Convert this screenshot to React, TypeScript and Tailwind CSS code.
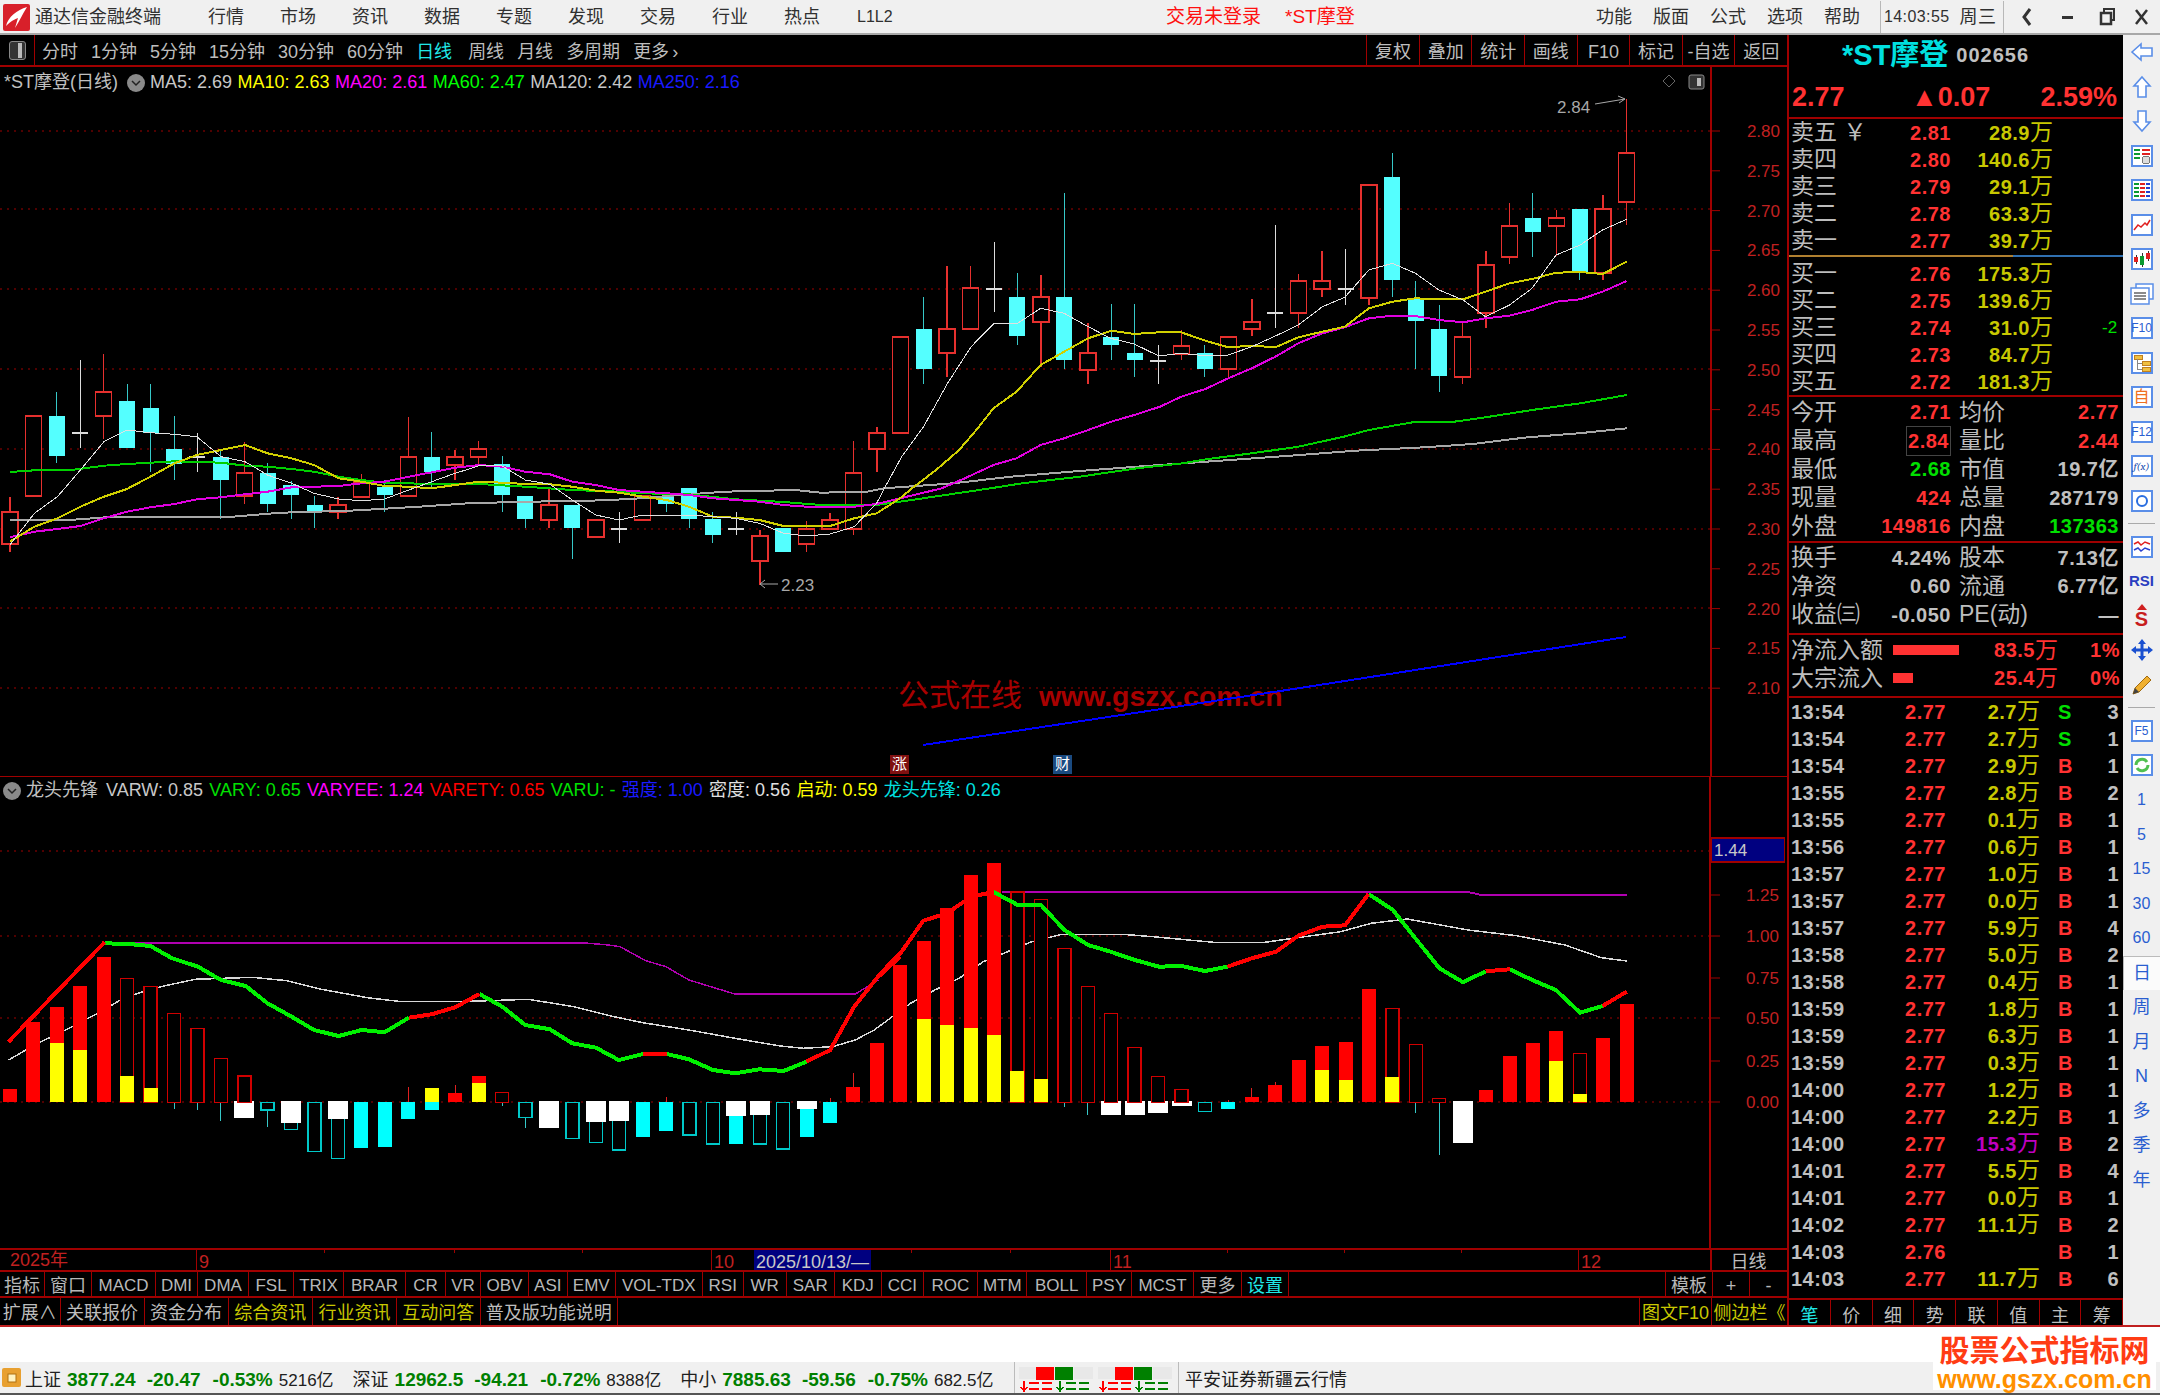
import React from "react";

const FONT = { fontFamily: '"Liberation Sans","Noto Sans CJK SC",sans-serif' };

type Candle = [number, number, number, number, "r" | "c" | "w"];

// body top, body bottom, wick top, wick bottom, in page pixels
const candles: Candle[] = [
  [512, 544, 497, 552, "r"], [416, 496, 416, 496, "r"], [416, 456, 392, 463, "c"], [433, 433, 360, 448, "w"],
  [392, 416, 354, 439, "r"], [401, 448, 384, 448, "c"], [408, 433, 384, 472, "c"], [449, 464, 416, 480, "c"],
  [457, 457, 433, 472, "w"], [457, 480, 450, 519, "c"], [473, 496, 442, 504, "r"], [473, 504, 463, 512, "c"],
  [485, 495, 481, 519, "c"], [505, 512, 496, 528, "c"], [505, 512, 497, 519, "r"], [482, 497, 474, 497, "r"],
  [487, 495, 480, 512, "c"], [457, 496, 417, 496, "r"], [457, 472, 432, 487, "c"], [457, 465, 450, 480, "r"],
  [449, 457, 441, 465, "r"], [464, 495, 456, 512, "c"], [496, 519, 496, 528, "c"], [505, 520, 487, 528, "r"],
  [505, 528, 505, 559, "c"], [520, 537, 520, 537, "r"], [529, 529, 512, 543, "w"], [496, 520, 496, 520, "r"],
  [496, 504, 496, 512, "c"], [488, 519, 488, 528, "c"], [519, 535, 512, 543, "c"], [529, 529, 512, 535, "w"],
  [536, 561, 530, 585, "r"], [528, 552, 528, 552, "c"], [529, 544, 521, 552, "r"], [520, 529, 513, 529, "r"],
  [473, 529, 441, 535, "r"], [433, 449, 427, 472, "r"], [337, 433, 337, 433, "r"], [329, 369, 297, 384, "c"],
  [329, 353, 266, 377, "r"], [288, 329, 266, 329, "r"], [289, 289, 242, 312, "w"], [297, 336, 273, 345, "c"],
  [297, 322, 275, 367, "r"], [297, 360, 193, 369, "c"], [353, 370, 323, 384, "r"], [337, 345, 304, 360, "c"],
  [353, 360, 304, 377, "c"], [361, 361, 345, 384, "w"], [346, 354, 330, 360, "r"], [353, 369, 345, 377, "c"],
  [337, 369, 337, 377, "r"], [322, 329, 299, 336, "r"], [313, 313, 225, 328, "w"], [281, 313, 274, 328, "r"],
  [281, 289, 251, 297, "r"], [289, 289, 249, 305, "w"], [185, 298, 185, 305, "r"], [177, 280, 153, 297, "c"],
  [298, 321, 281, 369, "c"], [329, 376, 305, 392, "c"], [337, 377, 323, 384, "r"], [265, 313, 251, 328, "r"],
  [226, 257, 203, 264, "r"], [218, 232, 193, 257, "c"], [218, 226, 210, 256, "r"], [209, 272, 209, 280, "c"],
  [209, 273, 195, 280, "r"], [153, 202, 99, 225, "r"],
];

const slotX = (i: number) => 10 + 23.43 * i;

type P = [number, number];
const a7 = (l: P[]): P[] => l.map(([x, y]) => [x / 1.742, 300 + y / 3]);
const a8 = (l: P[]): P[] => l.map(([x, y]) => [850 + x / 1.742, 90 + y / 3]);
const b9 = (l: P[]): P[] => l.map(([x, y]) => [x / 1.742, 770 + y / 3]);
const b10 = (l: P[]): P[] => l.map(([x, y]) => [850 + x / 1.6505, 770 + y / 3]);
const pts = (l: P[]) => l.map(([x, y]) => `${x.toFixed(1)},${y.toFixed(1)}`).join(" ");

const ma5 = [
  ...a7([[17,735],[60,640],[100,590],[140,510],[181,425],[221,390],[262,398],[304,403],[343,410],[385,470],[427,485],[466,525],[508,550],[547,580],[590,597],[630,602],[670,597],[712,570],[752,545],[793,520],[835,497],[875,498],[915,540],[958,553],[997,600],[1038,645],[1078,660],[1120,645],[1162,645],[1200,645],[1242,650],[1281,655],[1323,670],[1365,700],[1405,708],[1446,702],[1488,680],[1527,610]]),
  ...a8([[60,1195],[90,1100],[128,1010],[170,880],[211,770],[251,700],[292,700],[332,655],[373,670],[415,710],[454,745],[495,762],[538,798],[577,790],[619,797],[659,795],[700,770],[741,738],[781,705],[823,650],[862,622],[904,540],[945,520],[985,550],[1026,600],[1068,630],[1107,680],[1149,645],[1188,595],[1230,495],[1272,465],[1311,420],[1353,388]]),
];
const ma10 = [
  ...a7([[17,725],[60,680],[100,655],[140,620],[181,590],[221,567],[262,530],[304,490],[343,465],[385,450],[427,435],[466,460],[508,475],[547,495],[590,535],[630,545],[670,558],[712,560],[752,565],[793,555],[835,545],[875,548],[915,552],[958,553],[997,560],[1038,572],[1078,578],[1120,590],[1162,600],[1200,620],[1242,650],[1281,653],[1323,660],[1365,678],[1405,678],[1446,678],[1488,655],[1527,640],[1568,595]]),
  ...a8([[108,1195],[150,1140],[190,1080],[220,1020],[250,955],[290,905],[332,825],[373,785],[415,745],[455,722],[495,732],[538,727],[577,727],[619,752],[659,772],[700,767],[741,772],[781,742],[823,725],[862,710],[904,655],[945,635],[985,625],[1026,628],[1068,628],[1107,605],[1149,580],[1188,567],[1230,548],[1272,546],[1311,552],[1353,515]]),
];
const ma20 = [
  ...a7([[17,712],[60,695],[100,687],[140,678],[181,655],[221,635],[262,622],[304,612],[343,598],[385,592],[427,583],[466,575],[508,562],[547,560],[590,558],[630,550],[670,545],[712,530],[752,517],[793,503],[835,495],[875,500],[915,515],[958,523],[997,545],[1038,555],[1078,570],[1120,575],[1162,580],[1200,585],[1242,595],[1281,600],[1323,605],[1365,615],[1405,620],[1446,622],[1488,620],[1527,612],[1568,595]]),
  ...a8([[160,1195],[200,1165],[250,1125],[290,1105],[332,1065],[373,1045],[415,1020],[455,995],[495,975],[540,950],[577,920],[619,897],[659,865],[700,835],[741,800],[781,760],[823,730],[862,712],[904,685],[945,677],[985,678],[1026,690],[1068,697],[1107,685],[1149,677],[1188,660],[1230,635],[1272,628],[1311,605],[1353,573]]),
];
const ma60 = [
  ...a7([[17,516],[60,511],[120,511],[181,497],[221,492],[262,488],[304,484],[385,488],[427,497],[466,500],[508,507],[547,515],[590,530],[630,540],[670,548],[752,552],[835,552],[915,560],[997,570],[1078,575],[1120,580],[1200,583],[1281,598],[1365,606],[1430,615],[1527,615],[1568,605]]),
  ...a8([[245,1195],[300,1180],[400,1160],[500,1135],[580,1120],[620,1108],[700,1090],[781,1070],[860,1040],[904,1020],[980,997],[1045,997],[1107,982],[1188,960],[1272,940],[1353,915]]),
];
const ma120 = [
  ...a7([[17,660],[120,660],[200,650],[405,650],[490,638],[610,632],[730,620],[815,610],[915,605],[1015,603],[1100,597],[1185,585],[1262,575],[1385,570],[1430,578],[1510,575]]),
  ...a8([[60,1195],[180,1180],[280,1160],[400,1143],[500,1130],[620,1115],[760,1098],[880,1082],[1000,1072],[1085,1062],[1180,1042],[1270,1030],[1353,1015]]),
];

type Bar = { u?: number; y?: number; h?: 1; w?: number; wh?: number; c?: number; ch?: 1 };
const bars: Bar[] = [
  { u: 958 }, { u: 755 }, { u: 711, y: 818 }, { u: 647, y: 841 }, { u: 562 }, { u: 626, y: 917, h: 1 }, { u: 649, y: 953, h: 1 },
  { u: 730, h: 1, w: 1017 }, { u: 775, h: 1, w: 1020 }, { u: 865, h: 1, w: 1052 }, { u: 918, h: 1, wh: 1043 }, { c: 1020, ch: 1, w: 1070 },
  { wh: 1060, c: 1078, ch: 1 }, { c: 1145, ch: 1 }, { wh: 1047, c: 1165, ch: 1 }, { c: 1133 }, { c: 1130 }, { c: 1047, w: 950 },
  { u: 953, y: 953, c: 1020 }, { u: 968, w: 945 }, { u: 918, y: 940 }, { u: 968, h: 1, w: 1007 }, { c: 1043, ch: 1, w: 1075 }, { wh: 1075 },
  { c: 1105, ch: 1 }, { wh: 1057, c: 1118, ch: 1 }, { wh: 1052, c: 1140, ch: 1 }, { c: 1102 }, { c: 1083, w: 980 }, { c: 1095, ch: 1 },
  { c: 1122, ch: 1 }, { wh: 1038, c: 1123 }, { wh: 1034, c: 1122, ch: 1 }, { c: 1137, ch: 1 }, { wh: 1016, c: 1102 }, { c: 1060, w: 985 },
  { u: 950, w: 908 }, { u: 818 }, { u: 585 }, { u: 513, y: 746 }, { u: 414, y: 764 }, { u: 315, y: 773 }, { u: 279, y: 796 },
  { u: 366, y: 904, h: 1 }, { u: 388, y: 927, h: 1 }, { u: 536, h: 1, w: 1012 }, { u: 649, h: 1, w: 1034 }, { u: 730, h: 1, wh: 1034 },
  { u: 833, h: 1, wh: 1034 }, { u: 919, h: 1, wh: 1030 }, { u: 959, h: 1, wh: 1007 }, { c: 1025, ch: 1 }, { c: 1016, w: 990 },
  { u: 981, w: 953 }, { u: 945, w: 935 }, { u: 869 }, { u: 828, y: 900 }, { u: 815, y: 931 }, { u: 657 }, { u: 716, y: 922, h: 1 },
  { u: 824, h: 1, w: 1030 }, { u: 985, h: 1, w: 1155 }, { wh: 1120 }, { u: 959 }, { u: 859 }, { u: 819 }, { u: 783, y: 872 },
  { u: 851, y: 971, h: 1 }, { u: 805 }, { u: 702 },
];
const lowY = (v: number) => 770 + v / 3;

const redSegs: P[][] = [
  b9([[15,815],[182,517]]),
  b9([[712,743],[752,733],[793,712],[835,672]]),
  b9([[1120,852],[1162,852]]),
  b9([[1405,875],[1446,840],[1488,710],[1527,625],[1568,560]]),
  b10([[45,620],[84,548],[121,452],[160,430],[200,380],[237,366]]),
  b10([[623,590],[663,565],[703,545],[740,497],[780,470],[817,466],[856,372]]),
  b10([[1049,604],[1089,598]]),
  b10([[1242,708],[1282,665]]),
];
const greenSegs: P[][] = [
  b9([[182,520],[225,522],[262,528],[300,565],[345,590],[385,630],[428,648],[466,700],[508,740],[547,780],[590,798],[630,780],[670,787],[712,743]]),
  b9([[835,672],[875,710],[915,765],[958,778],[997,820],[1038,833],[1078,870],[1120,852]]),
  b9([[1162,852],[1200,868],[1242,900],[1281,910],[1323,898],[1365,903],[1405,875]]),
  b10([[237,366],[277,405],[315,405],[354,480],[393,525],[430,545],[470,570],[510,590],[547,588],[586,603],[623,590]]),
  b10([[856,372],[896,420],[933,505],[973,595],[1012,637],[1049,604]]),
  b10([[1089,598],[1126,630],[1165,660],[1205,728],[1242,708]]),
];
const purple1 = b9([[182,519],[1020,519],[1060,525],[1080,530],[1125,572],[1160,590],[1200,630],[1280,672],[1490,672],[1530,630]]);
const purple2 = b10([[250,366],[1020,366],[1040,374],[1282,374]]);
const whiteLine = [
  ...b9([[15,870],[60,825],[120,775],[170,730],[210,690],[240,670],[280,650],[340,628],[440,622],[500,632],[560,658],[640,683],[700,695],[800,695],[920,688],[1000,710],[1070,740],[1120,758],[1200,780],[1280,805],[1360,828],[1400,835],[1450,830],[1490,810]]),
  ...b10([[40,780],[100,700],[140,660],[180,625],[220,575],[260,545],[300,515],[350,493],[450,493],[500,500],[600,517],[680,518],[750,500],[810,485],[860,460],[920,447],[1020,480],[1100,497],[1180,525],[1240,563],[1282,573]]),
];

function UpperChart() {
  const gridYs = [131, 209, 289, 369, 449, 529, 608, 688];
  const labels = ["2.80", "2.75", "2.70", "2.65", "2.60", "2.55", "2.50", "2.45", "2.40", "2.35", "2.30", "2.25", "2.20", "2.15", "2.10"];
  return (
    <svg className="block" width="1785" height="709" viewBox="0 67 1785 709" style={FONT}>
      {gridYs.map((y) => (
        <line key={y} x1="0" x2="1711" y1={y} y2={y} stroke="#a00000" strokeDasharray="2 5" />
      ))}
      <line x1="1711" x2="1711" y1="67" y2="776" stroke="#a00000" strokeWidth="2" />
      {labels.map((l, i) => (
        <g key={l}>
          <line x1="1711" x2="1720" y1={131 + i * 39.8} y2={131 + i * 39.8} stroke="#a00000" />
          <text x="1780" y={137 + i * 39.8} fontSize="17" fill="#c02020" textAnchor="end">{l}</text>
        </g>
      ))}
      {candles.map(([top, bottom, high, low, kind], i) => {
        const x = slotX(i);
        const color = kind === "r" ? "#e6302e" : kind === "c" ? "#54ffff" : "#dcdcdc";
        if (kind === "w") {
          return (
            <g key={i} shapeRendering="crispEdges">
              <line x1={x} x2={x} y1={high} y2={low} stroke={color} />
              <line x1={x - 8} x2={x + 8} y1={top} y2={top} stroke={color} strokeWidth="2" />
            </g>
          );
        }
        return (
          <g key={i} shapeRendering="crispEdges">
            <line x1={x} x2={x} y1={high} y2={low} stroke={kind === "r" ? "#e6302e" : "#36c8c8"} strokeWidth={kind === "r" ? 1.5 : 1} />
            {kind === "r" ? (
              <rect x={x - 8} y={top} width="16" height={bottom - top} fill="#000" stroke={color} strokeWidth="1.5" />
            ) : (
              <rect x={x - 8} y={top} width="16" height={bottom - top} fill={color} />
            )}
          </g>
        );
      })}
      <g shapeRendering="crispEdges" fill="none">
        <polyline points={pts(ma120)} stroke="#a8a8a8" strokeWidth="2" />
        <polyline points={pts(ma60)} stroke="#00d000" strokeWidth="2" />
        <polyline points={pts(ma20)} stroke="#e000e0" strokeWidth="2" />
        <polyline points={pts(ma10)} stroke="#d0d000" strokeWidth="2" />
        <polyline points={pts(ma5)} stroke="#e0e0e0" strokeWidth="1" />
      </g>
      <text x="898" y="706" fontSize="31" fill="#a80000">公式在线</text>
      <text x="1039" y="706" fontSize="28.4" fontWeight="700" fill="#a80000">www.gszx.com.cn</text>
      <polyline points="923,745 1300,688 1626,637" fill="none" stroke="#0000ff" strokeWidth="2" shapeRendering="crispEdges" />
      <text x="1557" y="113" fontSize="17" fill="#a8a8a8">2.84</text>
      <path d="M1595 104 L1625 99 M1618 96 L1625 99 L1619 103" fill="none" stroke="#a8a8a8" />
      <path d="M760 584 H778 M765 580 L760 584 L765 588" fill="none" stroke="#a8a8a8" />
      <text x="781" y="591" fontSize="17" fill="#a8a8a8">2.23</text>
      <path d="M1669 75 L1675 81 L1669 87 L1663 81 Z" fill="none" stroke="#666" />
      <rect x="1689" y="75" width="15" height="14" rx="2" fill="#333" stroke="#888" />
      <rect x="1697" y="78" width="4" height="8" fill="#bbb" />
    </svg>
  );
}

function LowerChart() {
  const ticks: [number, string][] = [[895, "1.25"], [936, "1.00"], [978, "0.75"], [1018, "0.50"], [1061, "0.25"], [1102, "0.00"]];
  return (
    <svg className="block" width="1785" height="471" viewBox="0 777 1785 471" style={FONT}>
      {[851, 936, 1018, 1102].map((y) => (
        <line key={y} x1="0" x2="1711" y1={y} y2={y} stroke="#a00000" strokeDasharray="2 5" />
      ))}
      <line x1="1710" x2="1710" y1="777" y2="1248" stroke="#a00000" strokeWidth="2" />
      {ticks.map(([y, l]) => (
        <g key={l}>
          <line x1="1711" x2="1720" y1={y} y2={y} stroke="#a00000" />
          <text x="1779" y={y + 6} fontSize="17" fill="#c02020" textAnchor="end">{l}</text>
        </g>
      ))}
      <rect x="1711" y="838" width="74" height="24" fill="#000080" stroke="#a00000" strokeWidth="2" />
      <text x="1714" y="856" fontSize="17" fill="#c8c8c8">1.44</text>
      <g shapeRendering="crispEdges" fill="none">
        <polyline points={pts(whiteLine)} stroke="#d8d8d8" strokeWidth="1.5" />
        <polyline points={pts(purple1)} stroke="#b000b0" strokeWidth="1.5" />
        <polyline points={pts(purple2)} stroke="#b000b0" strokeWidth="2" />
      </g>
      {bars.map((b, i) => {
        const x = slotX(i);
        const zero = lowY(997);
        return (
          <g key={i} shapeRendering="crispEdges">
            {b.w !== undefined && (
              <line x1={x} x2={x} y1={zero} y2={lowY(b.w)} stroke={b.w < 997 ? "#e02020" : "#36c8c8"} />
            )}
            {b.c !== undefined &&
              (b.ch ? (
                <rect x={x - 6.5} y={zero} width="13" height={lowY(b.c) - zero} fill="#000" stroke="#00c8c8" strokeWidth="1.5" />
              ) : (
                <rect x={x - 7} y={zero} width="14" height={lowY(b.c) - zero} fill="#00ffff" />
              ))}
            {b.wh !== undefined && (
              <rect x={x - 10} y={zero - 1} width="20" height={lowY(b.wh) - zero + 1} fill="#fff" />
            )}
            {b.u !== undefined &&
              (b.h ? (
                <rect x={x - 6.5} y={lowY(b.u)} width="13" height={zero - lowY(b.u)} fill="#000" stroke="#d00000" strokeWidth="1.5" />
              ) : (
                <rect x={x - 7} y={lowY(b.u)} width="14" height={zero - lowY(b.u)} fill="#ff0000" />
              ))}
            {b.y !== undefined && (
              <rect x={x - 7} y={lowY(b.y)} width="14" height={zero - lowY(b.y)} fill="#ffff00" />
            )}
          </g>
        );
      })}
      <g shapeRendering="crispEdges" fill="none" strokeWidth="4">
        {greenSegs.map((s, i) => (
          <polyline key={i} points={pts(s)} stroke="#00f000" />
        ))}
        {redSegs.map((s, i) => (
          <polyline key={i} points={pts(s)} stroke="#ff0000" />
        ))}
      </g>
    </svg>
  );
}

const CircleChevron = () => (
  <span className="flex h-[18px] w-[18px] items-center justify-center rounded-full bg-[#8a8a8a]">
    <svg width="10" height="10" viewBox="0 0 10 10">
      <path d="M1 3 L5 7 L9 3" fill="none" stroke="#222" strokeWidth="1.5" />
    </svg>
  </span>
);

function Logo() {
  return (
    <svg width="27" height="27" viewBox="0 0 27 27" className="ml-[3px] shrink-0">
      <rect width="27" height="27" rx="2" fill="#d8202a" />
      <path d="M24 3 C14 6 5 13 3 22 C8 17 12 15 15 14 L12 24 C16 18 19 11 24 3 Z" fill="#fff" />
    </svg>
  );
}

function TitleBar() {
  const menus = ["行情", "市场", "资讯", "数据", "专题", "发现", "交易", "行业", "热点"];
  const right = ["功能", "版面", "公式", "选项", "帮助"];
  return (
    <div className="flex h-[35px] items-center border-b-2 border-[#a8a8a8] bg-[#f0f0f0] pt-[1px] text-[18px] whitespace-nowrap text-[#303030]">
      <Logo />
      <span className="ml-[5px] w-[173px] shrink-0">通达信金融终端</span>
      <div className="flex shrink-0 gap-[36px]">
        {menus.map((m) => (
          <span key={m}>{m}</span>
        ))}
      </div>
      <span className="ml-[37px] w-[309px] shrink-0 text-[16px]">L1L2</span>
      <span className="w-[119px] shrink-0 text-[19px] text-[#ff1010]">交易未登录</span>
      <span className="w-[311px] shrink-0 text-[19px] text-[#ff1010]">*ST摩登</span>
      <div className="flex shrink-0 gap-[21px]">
        {right.map((m) => (
          <span key={m}>{m}</span>
        ))}
      </div>
      <div className="ml-[20px] flex h-full w-[124px] shrink-0 items-center gap-[10px] border-x border-[#b8b8b8] pl-[3px] text-[16px] tracking-[0.4px]">
        <span>14:03:55</span>
        <span className="text-[18px]">周三</span>
      </div>
      <svg width="157" height="24" viewBox="0 0 157 24" className="shrink-0">
        <path d="M26 4 L20 12 L26 20" fill="none" stroke="#333" strokeWidth="3" />
        <rect x="58" y="11" width="11" height="3" fill="#333" />
        <rect x="97" y="8" width="10" height="11" fill="none" stroke="#333" strokeWidth="2.5" />
        <path d="M100 8 V4 H110 V15 H107" fill="none" stroke="#333" strokeWidth="2" />
        <path d="M132 5 L143 19 M143 5 L132 19" stroke="#333" strokeWidth="2.5" />
      </svg>
    </div>
  );
}

function Toolbar() {
  const tabs = ["分时", "1分钟", "5分钟", "15分钟", "30分钟", "60分钟", "日线", "周线", "月线", "多周期", "更多"];
  const right = ["复权", "叠加", "统计", "画线", "F10", "标记", "-自选", "返回"];
  return (
    <div className="flex h-[32px] items-center justify-between border-b-2 border-[#a00000] text-[18px] text-[#bdbdbd]">
      <div className="flex h-full items-center">
        <div className="flex h-full w-[35px] items-center justify-center border-r border-[#a00000]">
          <span className="h-[19px] w-[17px] rounded-[3px] border border-[#888] bg-[#333] pl-[8px]">
            <span className="block h-[15px] w-[4px] translate-y-[1px] bg-[#bbb]" />
          </span>
        </div>
        <div className="ml-[7px] flex gap-[13px] pt-[4px]">
          {tabs.map((t) => (
            <span key={t} className={t === "日线" ? "text-[#20e8e8]" : t === "周线" ? "ml-[3px]" : ""}>
              {t}
              {t === "更多" && <span className="ml-[3px]">›</span>}
            </span>
          ))}
        </div>
      </div>
      <div className="flex h-full">
        {right.map((t) => (
          <span key={t} className="flex w-[52.6px] items-center justify-center border-l border-[#a00000] pt-[4px] whitespace-nowrap">
            {t}
          </span>
        ))}
      </div>
    </div>
  );
}

function UpperPane() {
  const legends: [string, string][] = [
    ["MA5: 2.69", "text-[#c8c8c8]"],
    ["MA10: 2.63", "text-[#ffff00]"],
    ["MA20: 2.61", "text-[#ff00ff]"],
    ["MA60: 2.47", "text-[#00ff00]"],
    ["MA120: 2.42", "text-[#c8c8c8]"],
    ["MA250: 2.16", "text-[#1a1aff]"],
  ];
  return (
    <div className="relative h-[709px]">
      <UpperChart />
      <div className="absolute top-[2px] left-[4px] flex items-center text-[18px] text-[#c0c0c0]">
        <span className="w-[123px] whitespace-nowrap">*ST摩登(日线)</span>
        <CircleChevron />
        <div className="ml-[5px] flex gap-[5.5px]">
          {legends.map(([t, c]) => (
            <span key={t} className={c + " whitespace-nowrap"}>{t}</span>
          ))}
        </div>
      </div>
      <span className="absolute top-[688px] left-[890px] flex h-[19px] w-[19px] items-center justify-center bg-[#801010] text-[15px] text-white">涨</span>
      <span className="absolute top-[688px] left-[1053px] flex h-[19px] w-[19px] items-center justify-center bg-[#1a4a80] text-[15px] text-white">财</span>
    </div>
  );
}

function LowerPane() {
  const legends: [string, string][] = [
    ["VARW: 0.85", "text-[#c8c8c8]"],
    ["VARY: 0.65", "text-[#00e000]"],
    ["VARYEE: 1.24", "text-[#ff00ff]"],
    ["VARETY: 0.65", "text-[#ff0000]"],
    ["VARU: -", "text-[#00e000]"],
    ["强度: 1.00", "text-[#1a1aff]"],
    ["密度: 0.56", "text-[#e0e0e0]"],
    ["启动: 0.59", "text-[#ffff00]"],
    ["龙头先锋: 0.26", "text-[#00e0e0]"],
  ];
  return (
    <div className="relative h-[471px]">
      <LowerChart />
      <div className="absolute top-0 left-[3px] flex items-center text-[18px] text-[#c0c0c0]">
        <CircleChevron />
        <span className="ml-[5px]">龙头先锋</span>
        <div className="ml-[8px] flex gap-[6.3px]">
          {legends.map(([t, c]) => (
            <span key={t} className={c + " whitespace-nowrap"}>{t}</span>
          ))}
        </div>
      </div>
    </div>
  );
}

function DateAxis() {
  const labels: [number, string][] = [[196, "9"], [711, "10"], [1110, "11"], [1578, "12"]];
  const small = [324, 454, 582, 911, 1010, 1227, 1344, 1461];
  return (
    <div className="relative flex h-[24px] items-center border-y-2 border-[#a00000] text-[18px] leading-[25px] text-[#c02020]">
      <span className="ml-[10px]">2025年</span>
      {labels.map(([x, l]) => (
        <span key={l} className="absolute top-0 bottom-0 border-l border-[#a00000] pl-[2px]" style={{ left: x }}>{l}</span>
      ))}
      {small.map((x) => (
        <span key={x} className="absolute top-0 h-[3px] border-l border-[#a00000]" style={{ left: x }} />
      ))}
      <span className="absolute top-0 bottom-0 left-[754px] w-[117px] bg-[#000080] text-center text-[#c8c8c8] whitespace-nowrap">2025/10/13/—</span>
      <span className="absolute top-0 bottom-0 left-[1710px] w-[75px] border-l-2 border-[#a00000] text-center text-[#bdbdbd]">日线</span>
    </div>
  );
}

function IndicatorTabs() {
  const tabs: [string, number, string?][] = [
    ["指标", 45, "t"], ["窗口", 47, "t"], ["MACD", 64], ["DMI", 42], ["DMA", 51], ["FSL", 45], ["TRIX", 50], ["BRAR", 62], ["CR", 40], ["VR", 35],
    ["OBV", 48], ["ASI", 38.5], ["EMV", 48.5], ["VOL-TDX", 86.5], ["RSI", 41.5], ["WR", 42.5], ["SAR", 48.5], ["KDJ", 46.6], ["CCI", 42.4], ["ROC", 54],
    ["MTM", 49.5], ["BOLL", 59.5], ["PSY", 45], ["MCST", 62], ["更多", 48, "t"], ["设置", 47, "c"],
  ];
  return (
    <div className="flex h-[26px] items-stretch justify-between border-b-2 border-[#a00000] text-[17px] text-[#b8b8b8]">
      <div className="flex">
        {tabs.map(([t, w, k]) => (
          <span
            key={t}
            className={"flex items-center justify-center border-r border-[#a00000] pt-[4px] whitespace-nowrap " + (k ? "text-[18px] " : "") + (k === "c" ? "text-[#20e8e8]" : "")}
            style={{ width: w }}
          >
            {t}
          </span>
        ))}
      </div>
      <div className="flex text-[18px]">
        <span className="flex w-[47px] items-center justify-center border-l border-[#a00000] pt-[4px]">模板</span>
        <span className="flex w-[37px] items-center justify-center border-l border-[#a00000] pt-[4px]">+</span>
        <span className="flex w-[38px] items-center justify-center border-l border-[#a00000] pt-[4px]">-</span>
      </div>
    </div>
  );
}

function ExtraTabs() {
  const tabs: [string, number, boolean][] = [
    ["扩展∧", 60.6, false], ["关联报价", 84, false], ["资金分布", 84, false], ["综合资讯", 84.4, true],
    ["行业资讯", 84, true], ["互动问答", 83.7, true], ["普及版功能说明", 137.3, false],
  ];
  return (
    <div className="flex h-[27px] items-stretch justify-between text-[18px] text-[#bdbdbd]">
      <div className="flex">
        {tabs.map(([t, w, y]) => (
          <span key={t} className={"flex items-center justify-center border-r border-[#a00000] pt-[4px] whitespace-nowrap " + (y ? "text-[#c8c800]" : "")} style={{ width: w }}>
            {t}
          </span>
        ))}
      </div>
      <div className="flex text-[#c8c800]">
        <span className="flex w-[72px] items-center justify-center border-l border-[#a00000] pt-[4px] whitespace-nowrap">图文F10</span>
        <span className="flex w-[76px] items-center justify-center border-l border-[#a00000] pt-[4px] whitespace-nowrap">侧边栏《</span>
      </div>
    </div>
  );
}

const RED = "text-[#ff3232]";
const YEL = "text-[#c8c800]";
const GRY = "text-[#c0c0c0]";
const GRN = "text-[#00e000]";
const LBL = "text-[23px] leading-none text-[#bdbdbd] whitespace-nowrap";
const NUM = "text-[20px] leading-none font-bold tracking-[0.5px] whitespace-nowrap";

function BookRow({ label, price, vol, extra }: { label: string; price: string; vol: string; extra?: string }) {
  return (
    <div className="flex h-[27px] items-center pl-[2px]">
      <span className={LBL + " w-[118px]"}>{label}</span>
      <span className={NUM + " w-[42px] text-right " + RED}>{price}</span>
      <span className={"flex w-[102px] items-center justify-end " + YEL}>
        <span className={NUM}>{vol}</span>
        <span className="text-[23px] leading-none">万</span>
      </span>
      {extra && <span className={"ml-[49px] text-[17px] leading-none " + GRN}>{extra}</span>}
    </div>
  );
}

function StatRow({ l1, v1, c1, l2, v2, c2, boxed, small }: { l1: string; v1: string; c1: string; l2: string; v2: string; c2: string; boxed?: boolean; small?: boolean }) {
  return (
    <div className="flex h-[28.5px] items-center pl-[2px]">
      <span className={LBL + " w-[88px]"}>{l1}</span>
      <span className={NUM + " w-[72px] text-right " + c1}>
        <span className={boxed ? "border border-[#444] px-[1px] py-[3px]" : ""}>{v1}</span>
      </span>
      <span className={LBL + " ml-[8px] w-[60px] " + (small ? "text-[20px]" : "")}>{l2}</span>
      <span className={NUM + " w-[100px] text-right " + c2}>{v2}</span>
    </div>
  );
}

function CnNum({ v, c, unit }: { v: string; c: string; unit: string }) {
  return (
    <span className={"flex items-center justify-end " + c}>
      <span className={NUM}>{v}</span>
      <span className="text-[23px] leading-none">{unit}</span>
    </span>
  );
}

const trades: [string, string, string, string, string][] = [
  ["13:54", "2.77", "2.7", "S", "3"], ["13:54", "2.77", "2.7", "S", "1"], ["13:54", "2.77", "2.9", "B", "1"], ["13:55", "2.77", "2.8", "B", "2"],
  ["13:55", "2.77", "0.1", "B", "1"], ["13:56", "2.77", "0.6", "B", "1"], ["13:57", "2.77", "1.0", "B", "1"], ["13:57", "2.77", "0.0", "B", "1"],
  ["13:57", "2.77", "5.9", "B", "4"], ["13:58", "2.77", "5.0", "B", "2"], ["13:58", "2.77", "0.4", "B", "1"], ["13:59", "2.77", "1.8", "B", "1"],
  ["13:59", "2.77", "6.3", "B", "1"], ["13:59", "2.77", "0.3", "B", "1"], ["14:00", "2.77", "1.2", "B", "1"], ["14:00", "2.77", "2.2", "B", "1"],
  ["14:00", "2.77", "15.3", "B", "2"], ["14:01", "2.77", "5.5", "B", "4"], ["14:01", "2.77", "0.0", "B", "1"], ["14:02", "2.77", "11.1", "B", "2"],
  ["14:03", "2.76", "", "B", "1"], ["14:03", "2.77", "11.7", "B", "6"],
];

function QuotePanel() {
  const panelTabs = ["笔", "价", "细", "势", "联", "值", "主", "筹"];
  return (
    <div className="flex w-[336px] shrink-0 flex-col border-l-2 border-[#a00000]" style={FONT}>
      <div className="flex h-[40px] items-center pl-[53px]">
        <span className="text-[29px] leading-none font-bold text-[#00e0e0]">*ST摩登</span>
        <span className="ml-[8px] text-[20px] leading-none font-bold tracking-[1px] text-[#c0c0c0]">002656</span>
      </div>
      <div className="relative h-[44px] border-b-2 border-[#a00000] text-[27px] leading-none font-bold text-[#ff3232]">
        <span className="absolute top-[9px] left-[3px]">2.77</span>
        <span className="absolute top-[9px] left-[122px]">▲0.07</span>
        <span className="absolute top-[9px] right-[6px]">2.59%</span>
      </div>
      <BookRow label="卖五 ￥" price="2.81" vol="28.9" />
      <BookRow label="卖四" price="2.80" vol="140.6" />
      <BookRow label="卖三" price="2.79" vol="29.1" />
      <BookRow label="卖二" price="2.78" vol="63.3" />
      <BookRow label="卖一" price="2.77" vol="39.7" />
      <div className="mt-[1px] mb-[3px] flex h-[2px]">
        <span className="w-[224px] bg-[#b08030]" />
        <span className="flex-1 bg-[#3070b0]" />
      </div>
      <BookRow label="买一" price="2.76" vol="175.3" />
      <BookRow label="买二" price="2.75" vol="139.6" />
      <BookRow label="买三" price="2.74" vol="31.0" extra="-2" />
      <BookRow label="买四" price="2.73" vol="84.7" />
      <BookRow label="买五" price="2.72" vol="181.3" />
      <div className="mb-[1px] h-[2px] bg-[#a00000]" />
      <StatRow l1="今开" v1="2.71" c1={RED} l2="均价" v2="2.77" c2={RED} />
      <StatRow l1="最高" v1="2.84" c1={RED} l2="量比" v2="2.44" c2={RED} boxed />
      <StatRow l1="最低" v1="2.68" c1={GRN} l2="市值" v2="19.7亿" c2={GRY} />
      <StatRow l1="现量" v1="424" c1={RED} l2="总量" v2="287179" c2={GRY} />
      <StatRow l1="外盘" v1="149816" c1={RED} l2="内盘" v2="137363" c2={GRN} />
      <div className="mb-[1px] h-[2px] bg-[#a00000]" />
      <StatRow l1="换手" v1="4.24%" c1={GRY} l2="股本" v2="7.13亿" c2={GRY} />
      <StatRow l1="净资" v1="0.60" c1={GRY} l2="流通" v2="6.77亿" c2={GRY} />
      <StatRow l1="收益㈢" v1="-0.050" c1={GRY} l2="PE(动)" v2="—" c2={GRY} small />
      <div className="mt-[4px] mb-[1px] h-[2px] bg-[#a00000]" />
      <div className="flex h-[28px] items-center pl-[2px]">
        <span className={LBL + " w-[102px]"}>净流入额</span>
        <span className="h-[10px] w-[66px] bg-[#ff3232]" />
        <span className="w-[99px]"><CnNum v="83.5" c={RED} unit="万" /></span>
        <span className={NUM + " w-[62px] text-right " + RED}>1%</span>
      </div>
      <div className="flex h-[28px] items-center pl-[2px]">
        <span className={LBL + " w-[102px]"}>大宗流入</span>
        <span className="h-[10px] w-[20px] bg-[#ff3232]" />
        <span className="w-[145px]"><CnNum v="25.4" c={RED} unit="万" /></span>
        <span className={NUM + " w-[62px] text-right " + RED}>0%</span>
      </div>
      <div className="mt-[4px] h-[2px] bg-[#a00000]" />
      {trades.map(([t, p, v, s, n], i) => (
        <div key={i} className="flex h-[27px] items-center pl-[2px]">
          <span className={NUM + " w-[100px] " + GRY}>{t}</span>
          <span className={NUM + " w-[55px] text-right " + RED}>{p}</span>
          <span className="w-[94px]">
            {v && <CnNum v={v} c={v === "15.3" ? "text-[#c000c0]" : YEL} unit="万" />}
          </span>
          <span className={NUM + " ml-[18px] w-[20px] " + (s === "S" ? GRN : RED)}>{s}</span>
          <span className={NUM + " w-[41px] text-right " + GRY}>{n}</span>
        </div>
      ))}
      <div className="mt-[6px] grid h-[27px] grid-cols-8 border-t-2 border-[#a00000] text-[18px] text-[#bdbdbd]">
        {panelTabs.map((t, i) => (
          <span key={t} className={"flex items-center justify-center border-r border-[#a00000] pt-[3px] " + (i === 0 ? "text-[#20e8e8]" : "")}>
            {t}
          </span>
        ))}
      </div>
    </div>
  );
}

const IconBox = ({ children }: { children: React.ReactNode }) => (
  <span className="flex h-[22px] w-[22px] items-center justify-center border-2 border-[#5a8ee8] bg-white">{children}</span>
);

const BoxText = ({ t }: { t: string }) => (
  <IconBox>
    <span className="text-[12px] leading-none text-[#2a5ed0]">{t}</span>
  </IconBox>
);

const Arrow = ({ d }: { d: string }) => (
  <svg width="24" height="24" viewBox="0 0 24 24">
    <path d={d} fill="#fff" stroke="#5a8ee8" strokeWidth="1.6" />
  </svg>
);

const Item = ({ children, h = "h-[34.5px]" }: { children: React.ReactNode; h?: string }) => (
  <div className={h + " flex shrink-0 items-center justify-center"}>{children}</div>
);

const Divider = () => <div className="mx-[5px] h-[1px] shrink-0 bg-[#aaa]" />;

function Sidebar() {
  return (
    <div className="flex w-[37px] shrink-0 flex-col bg-[#f0f0f0] text-[#2a5ed0]" style={FONT}>
      <Item><Arrow d="M2 12 L11 4 V8 H22 V16 H11 V20 Z" /></Item>
      <Item><Arrow d="M12 2 L20 11 H16 V22 H8 V11 H4 Z" /></Item>
      <Item><Arrow d="M12 22 L20 13 H16 V2 H8 V13 H4 Z" /></Item>
      <Item>
        <IconBox>
          <svg width="18" height="18" viewBox="0 0 18 18" shapeRendering="crispEdges">
            <path d="M1 3 H7 M1 7 H7 M1 11 H7" stroke="#0a9a30" strokeWidth="2" />
            <path d="M9 3 H17 M9 7 H17" stroke="#e02020" strokeWidth="2" />
            <circle cx="13" cy="13" r="4" fill="#ddd" stroke="#777" />
          </svg>
        </IconBox>
      </Item>
      <Item>
        <IconBox>
          <svg width="18" height="18" viewBox="0 0 18 18" shapeRendering="crispEdges">
            <path d="M1 3 H6 M1 7 H6 M1 11 H6 M1 15 H6" stroke="#0a9a30" strokeWidth="2" />
            <path d="M7 3 H12 M7 7 H12 M7 11 H12 M7 15 H12" stroke="#e02020" strokeWidth="2" />
            <path d="M13 3 H17 M13 7 H17 M13 11 H17 M13 15 H17" stroke="#2040d0" strokeWidth="2" />
          </svg>
        </IconBox>
      </Item>
      <Item>
        <IconBox>
          <svg width="18" height="18" viewBox="0 0 18 18">
            <path d="M1 14 L5 9 L8 11 L12 7 L14 9 L17 4" fill="none" stroke="#e02020" strokeWidth="1.5" />
          </svg>
        </IconBox>
      </Item>
      <Item>
        <IconBox>
          <svg width="18" height="18" viewBox="0 0 18 18" shapeRendering="crispEdges">
            <path d="M3 5 V14 M9 3 V17 M15 1 V11" stroke="#333" />
            <rect x="1" y="7" width="4" height="5" fill="#e02020" />
            <rect x="7" y="6" width="4" height="9" fill="#0a9a30" />
            <rect x="13" y="3" width="4" height="6" fill="#e02020" />
          </svg>
        </IconBox>
      </Item>
      <Item>
        <svg width="24" height="22" viewBox="0 0 24 22">
          <rect x="6" y="1" width="17" height="15" fill="#fff" stroke="#5a8ee8" strokeWidth="1.5" />
          <rect x="1" y="5" width="18" height="16" fill="#fff" stroke="#5a8ee8" strokeWidth="1.5" />
          <path d="M4 10 H16 M4 13 H16 M4 16 H16" stroke="#666" strokeWidth="1.5" />
        </svg>
      </Item>
      <Item><BoxText t="F10" /></Item>
      <Item>
        <IconBox>
          <svg width="18" height="18" viewBox="0 0 18 18" shapeRendering="crispEdges">
            <rect x="1" y="1" width="8" height="4" fill="#f0c040" stroke="#c08020" />
            <rect x="9" y="7" width="8" height="4" fill="#f0c040" stroke="#c08020" />
            <rect x="9" y="13" width="8" height="4" fill="#f0c040" stroke="#c08020" />
            <path d="M4 5 V15 H9 M4 9 H9" fill="none" stroke="#888" />
          </svg>
        </IconBox>
      </Item>
      <Item>
        <IconBox>
          <span className="text-[16px] leading-none text-[#f07020]">自</span>
        </IconBox>
      </Item>
      <Item><BoxText t="F12" /></Item>
      <Item>
        <IconBox>
          <span className="font-serif text-[11px] leading-none text-[#1a50b0] italic">f(x)</span>
        </IconBox>
      </Item>
      <Item>
        <IconBox>
          <svg width="16" height="16" viewBox="0 0 16 16">
            <circle cx="8" cy="8" r="5" fill="none" stroke="#2a6ee0" strokeWidth="2" />
          </svg>
        </IconBox>
      </Item>
      <div className="h-[5px] shrink-0" />
      <Divider />
      <div className="h-[5px] shrink-0" />
      <Item h="h-[36px]">
        <IconBox>
          <svg width="18" height="18" viewBox="0 0 18 18">
            <path d="M1 6 L5 4 L8 7 L12 4 L17 6" fill="none" stroke="#e02020" strokeWidth="1.5" />
            <path d="M1 12 L5 10 L8 13 L12 10 L17 12" fill="none" stroke="#2a40d0" strokeWidth="1.5" />
          </svg>
        </IconBox>
      </Item>
      <Item h="h-[30px]"><span className="text-[15px] leading-none font-bold text-[#2a3ec0]">RSI</span></Item>
      <Item h="h-[42px]">
        <div className="flex flex-col items-center">
          <svg width="10" height="6" viewBox="0 0 10 6"><path d="M5 0 L10 6 H0 Z" fill="#d02020" /></svg>
          <span className="text-[20px] leading-[18px] font-bold text-[#c81e1e]">S</span>
        </div>
      </Item>
      <Item h="h-[26px]">
        <svg width="24" height="24" viewBox="0 0 24 24" fill="#1a50d0">
          <path d="M12 1 L16 6 H13.5 V10.5 H18 V8 L23 12 L18 16 V13.5 H13.5 V18 H16 L12 23 L8 18 H10.5 V13.5 H6 V16 L1 12 L6 8 V10.5 H10.5 V6 H8 Z" />
        </svg>
      </Item>
      <Item h="h-[44px]">
        <svg width="24" height="24" viewBox="0 0 24 24">
          <path d="M3 21 L5 15 L17 3 L21 7 L9 19 Z" fill="#f0b030" stroke="#a06a10" />
          <path d="M3 21 L5 15 L9 19 Z" fill="#444" />
        </svg>
      </Item>
      <Divider />
      <Item h="h-[46px]"><BoxText t="F5" /></Item>
      <Item h="h-[22px]">
        <IconBox>
          <svg width="18" height="18" viewBox="0 0 18 18">
            <path d="M3 9 A6 6 0 0 1 14 6 M15 9 A6 6 0 0 1 4 12" fill="none" stroke="#50c050" strokeWidth="3" />
          </svg>
        </IconBox>
      </Item>
      <div className="h-[7px] shrink-0" />
      {["1", "5", "15", "30", "60"].map((t) => (
        <Item key={t}><span className="text-[16px] leading-none">{t}</span></Item>
      ))}
      <div className="flex h-[34.5px] shrink-0 items-center justify-center border-t border-l border-[#bbb] bg-[#fbfbfb] text-[18px] leading-none">日</div>
      {["周", "月", "N", "多", "季", "年"].map((t) => (
        <Item key={t}><span className="text-[18px] leading-none">{t}</span></Item>
      ))}
    </div>
  );
}

function MiniTrend() {
  return (
    <svg width="76" height="30" viewBox="0 0 76 30" className="shrink-0" shapeRendering="crispEdges">
      <rect x="0" y="4" width="17" height="12" fill="#e8e8e8" />
      <rect x="17" y="4" width="18" height="13" fill="#ff0000" />
      <rect x="36" y="4" width="18" height="13" fill="#008000" />
      <rect x="55" y="4" width="19" height="12" fill="#e8e8e8" />
      <path d="M5 18 V28 M2 24 L5 28 L8 24" fill="none" stroke="#ff0000" strokeWidth="1.5" />
      <path d="M10 20 H20 M10 26 H20 M23 20 H33 M23 26 H33" stroke="#ff0000" strokeWidth="2.5" />
      <path d="M41 18 V28 M38 24 L41 28 L44 24" fill="none" stroke="#008000" strokeWidth="1.5" />
      <path d="M47 20 H57 M47 26 H57 M60 20 H70 M60 26 H70" stroke="#008000" strokeWidth="2.5" />
    </svg>
  );
}

function StatusBar() {
  const idx: [string, string, string, string, string][] = [
    ["上证", "3877.24", "-20.47", "-0.53%", "5216亿"],
    ["深证", "12962.5", "-94.21", "-0.72%", "8388亿"],
    ["中小", "7885.63", "-59.56", "-0.75%", "682.5亿"],
  ];
  return (
    <div className="relative flex h-[33px] items-center border-b-2 border-[#555] bg-[#f0f0f0] text-[#202020]">
      <svg width="19" height="19" viewBox="0 0 19 19" className="ml-[2px] shrink-0">
        <rect width="19" height="19" rx="2" fill="#e8a030" />
        <rect x="6" y="6" width="8" height="8" fill="#fff2c0" stroke="#b07010" />
      </svg>
      <div className="ml-[4px] flex w-[989px] shrink-0 gap-[19px] pt-[6px]">
        {idx.map(([n, a, b, c, d]) => (
          <div key={n} className="flex items-center gap-[6px] whitespace-nowrap">
            <span className="text-[18px]">{n}</span>
            <span className="text-[19px] font-bold text-[#008000]">{a}</span>
            <span className="ml-[5px] text-[19px] font-bold text-[#008000]">{b}</span>
            <span className="ml-[6px] text-[19px] font-bold text-[#008000]">{c}</span>
            <span className="text-[17px]">{d}</span>
          </div>
        ))}
      </div>
      <div className="flex h-full items-center gap-[3px] border-x border-[#bbb] px-[4px]">
        <MiniTrend />
        <MiniTrend />
      </div>
      <span className="ml-[6px] pt-[6px] text-[18px]">平安证券新疆云行情</span>
      <div className="absolute right-[4px] bottom-[3px] flex h-[56px] w-[223px] flex-col items-center bg-white leading-none">
        <span className="mt-[2px] text-[30px] leading-none font-bold whitespace-nowrap text-[#ff3c14]">股票公式指标网</span>
        <span className="mt-[1px] text-[25px] leading-none font-bold whitespace-nowrap text-[#ff9000]">www.gszx.com.cn</span>
      </div>
    </div>
  );
}

export default function App() {
  return (
    <div className="flex h-[1395px] w-[2160px] flex-col overflow-hidden bg-white" style={FONT}>
      <TitleBar />
      <div className="flex h-[1290px] shrink-0">
        <div className="flex min-w-0 flex-1 flex-col bg-black">
          <Toolbar />
          <UpperPane />
          <div className="h-[2px] bg-[#a00000]" />
          <LowerPane />
          <DateAxis />
          <IndicatorTabs />
          <ExtraTabs />
        </div>
        <div className="flex bg-black">
          <QuotePanel />
        </div>
        <Sidebar />
      </div>
      <div className="h-[2px] shrink-0 bg-[#c02020]" />
      <div className="h-[35px] shrink-0 bg-white" />
      <StatusBar />
    </div>
  );
}
